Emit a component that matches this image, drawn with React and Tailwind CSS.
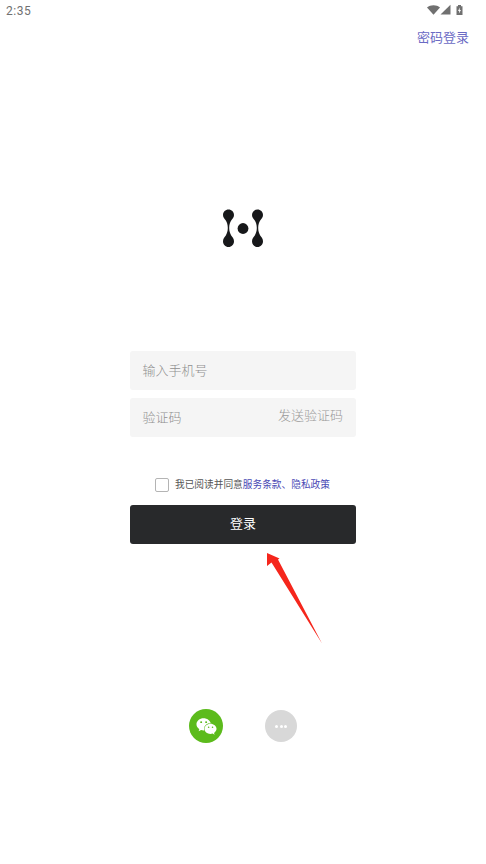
import React from "react";
import { FaWeixin } from "react-icons/fa";

export default function App() {
  return (
    <div className="relative w-[486px] h-[864px] bg-white overflow-hidden flex flex-col font-['Roboto','Noto_Sans_CJK_SC',sans-serif]">
      {/* status bar */}
      <div className="h-[20px] flex items-center justify-between pl-[6px] pr-[21px] pt-[1px]">
        <span className="text-[12px] leading-none tracking-[0.5px] text-[#707070]">2:35</span>
        <svg width="39" height="12" viewBox="0 0 39 12" className="block -mt-[2px]">
          <path d="M1 3.4C2.8 2 5 1.2 7.5 1.2S12.2 2 14 3.4L7.5 10.8Z" fill="#707070" />
          <path d="M14.5 10.6H24.5V0.8Z" fill="#707070" />
          <path d="M30.5 2.2H32V1H35V2.2H36.5V11H30.5Z" fill="#707070" />
          <path d="M33.8 3.6L32 7H33.2L32.9 9.4L35 6H33.7Z" fill="#fff" />
        </svg>
      </div>

      {/* top link */}
      <div className="flex justify-end pr-[17px] pt-[8px]">
        <span className="text-[13px] leading-[20px] text-[#6a6ac4]">密码登录</span>
      </div>

      {/* logo */}
      <div className="flex justify-center mt-[160px]">
        <svg width="40" height="40" viewBox="0 0 40 40" className="block">
          <circle cx="20" cy="20.5" r="5.4" fill="#17181a" />
          <path
            d="M5.5 1.5C2.4 1.5 0 3.9 0 7C0 9.4 1.6 10.8 2.8 12.6C4 14.6 4.8 17 4.8 20C4.8 23 4 25.4 2.8 27.4C1.6 29.2 0 30.6 0 33.2C0 36.4 2.4 39 5.5 39S11 36.4 11 33.2C11 30.6 9.4 29.2 8.2 27.4C7 25.4 6.2 23 6.2 20C6.2 17 7 14.6 8.2 12.6C9.4 10.8 11 9.4 11 7C11 3.9 8.6 1.5 5.5 1.5Z"
            fill="#17181a"
          />
          <path
            d="M34.5 1.5C31.4 1.5 29 3.9 29 7C29 9.4 30.6 10.8 31.8 12.6C33 14.6 33.8 17 33.8 20C33.8 23 33 25.4 31.8 27.4C30.6 29.2 29 30.6 29 33.2C29 36.4 31.4 39 34.5 39S40 36.4 40 33.2C40 30.6 38.4 29.2 37.2 27.4C36 25.4 35.2 23 35.2 20C35.2 17 36 14.6 37.2 12.6C38.4 10.8 40 9.4 40 7C40 3.9 37.6 1.5 34.5 1.5Z"
            fill="#17181a"
          />
        </svg>
      </div>

      {/* form */}
      <div className="flex flex-col w-[226px] ml-[130px] mt-[103px]">
        <div className="h-[39px] rounded-[3px] bg-[#f5f5f5] flex items-center px-[12.5px]">
          <span className="text-[13px] leading-none font-light text-[#8f8f8f]">输入手机号</span>
        </div>
        <div className="h-[39px] mt-[8px] rounded-[3px] bg-[#f5f5f5] flex items-center justify-between pl-[12.5px] pr-[13px]">
          <span className="text-[13px] leading-none font-light text-[#8f8f8f]">验证码</span>
          <span className="text-[13px] leading-none font-light text-[#999999] -mt-[4px]">发送验证码</span>
        </div>

        <div className="flex items-center mt-[41px] pl-[25px]">
          <span className="w-[14px] h-[14px] rounded-[2px] border border-[#b4b4b4] bg-white" />
          <span className="ml-[6px] text-[9.7px] leading-[14px] text-[#555555]">
            我已阅读并同意<span className="text-[#4a4ab5]">服务条款、隐私政策</span>
          </span>
        </div>

        <div className="h-[39px] mt-[13px] rounded-[3px] bg-[#28292b] flex items-center justify-center">
          <span className="text-[13px] leading-none text-white -mt-[3px]">登录</span>
        </div>
      </div>

      {/* social */}
      <div className="flex items-center mt-[165px] ml-[189px]">
        <div className="w-[34px] h-[34px] rounded-full bg-[#5cbb1c] flex items-center justify-center">
          <FaWeixin className="text-white w-[21px] h-[21px]" />
        </div>
        <div className="w-[32px] h-[32px] ml-[42px] rounded-full bg-[#d8d8d8] flex items-center justify-center gap-[1.5px]">
          <span className="w-[3px] h-[3px] rounded-full bg-white" />
          <span className="w-[3px] h-[3px] rounded-full bg-white" />
          <span className="w-[3px] h-[3px] rounded-full bg-white" />
        </div>
      </div>

      {/* annotation arrow */}
      <svg width="70" height="100" viewBox="0 0 70 100" className="absolute left-[260px] top-[548px]">
        <path d="M7 5L7 18L11.5 14.5L62 95.5L18 11.5L19.5 10.5Z" fill="#f5261c" />
      </svg>
    </div>
  );
}
